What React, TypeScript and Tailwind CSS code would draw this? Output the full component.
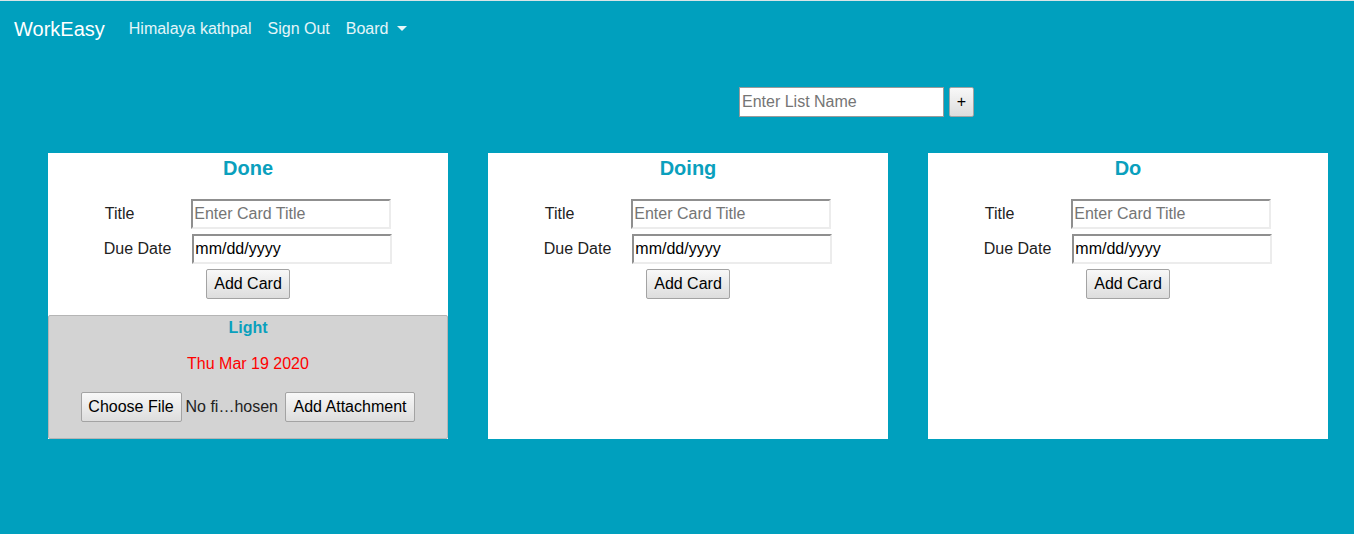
import React from 'react';

const lists = [
  { name: 'Done', cards: [{ title: 'Light', due: 'Thu Mar 19 2020' }] },
  { name: 'Doing', cards: [] },
  { name: 'Do', cards: [] },
];

const btn =
  'h-[30px] border border-[#a3a3a3] rounded-[2px] bg-gradient-to-b from-[#f8f8f8] to-[#dddddd] text-[16px] text-black leading-none';

const inset =
  'h-[30px] w-[200px] border-2 border-t-[#8f8f8f] border-l-[#8f8f8f] border-b-[#ececec] border-r-[#ececec] bg-white px-[1px] text-[16px] outline-none';

function CardItem({ title, due }: { title: string; due: string }) {
  return (
    <div className="mt-[16px] border border-[#b5b5b5] rounded-[2px] bg-[#d3d3d3] flex flex-col items-center pt-[3px] pb-[16px]">
      <h4 className="text-[16px] leading-[18px] font-bold text-[#0aa0bd]">{title}</h4>
      <p className="mt-[18px] text-[16px] leading-[18px] text-[#ff0000]">{due}</p>
      <div className="mt-[19px] flex items-center">
        <div className="flex items-center w-[200px]">
          <button className={`${btn} w-[101px]`}>Choose File</button>
          <span className="ml-[4px] text-[16px] text-[#222]">No fi…hosen</span>
        </div>
        <button className={`${btn} ml-[4px] px-[8px]`}>Add Attachment</button>
      </div>
    </div>
  );
}

function ListColumn({ name, cards }: { name: string; cards: { title: string; due: string }[] }) {
  return (
    <div className="w-[400px] bg-white flex flex-col">
      <h3 className="mt-[3px] text-center text-[20px] leading-[24px] font-bold text-[#0aa0bd]">{name}</h3>
      <div className="mt-[19px] flex justify-center">
        <div className="grid grid-cols-[auto_auto] gap-x-[20px] gap-y-[5px] items-center">
          <span className="pl-[1px] text-[16px] text-[#222]">Title</span>
          <input className={`${inset} placeholder:text-[#757575]`} placeholder="Enter Card Title" />
          <span className="text-[16px] text-[#222]">Due Date</span>
          <input className={`${inset} ml-[1px] text-black`} defaultValue="mm/dd/yyyy" readOnly />
        </div>
      </div>
      <div className="mt-[5px] flex justify-center">
        <button className={`${btn} px-[7px]`}>Add Card</button>
      </div>
      {cards.map((c) => (
        <CardItem key={c.title} title={c.title} due={c.due} />
      ))}
    </div>
  );
}

export default function App() {
  return (
    <div
      className="min-h-screen bg-[#00a0be] border-t border-[#d8e4e7]"
      style={{ fontFamily: '"Liberation Sans", Arial, sans-serif' }}
    >
      {/* Navbar */}
      <nav className="h-[55px] flex items-center px-[14px] text-white">
        <span className="text-[20px] leading-[30px]">WorkEasy</span>
        <div className="ml-[24px] flex items-center gap-[16px] text-[16px] text-white/90">
          <span>Himalaya kathpal</span>
          <span>Sign Out</span>
          <span className="flex items-center">
            Board
            <span className="ml-[9px] w-0 h-0 border-l-[5px] border-r-[5px] border-t-[5px] border-l-transparent border-r-transparent border-t-white/90" />
          </span>
        </div>
      </nav>

      {/* New list */}
      <div className="mt-[31px] pl-[739px] flex items-center">
        <input
          className="h-[30px] w-[205px] border border-[#9a9a9a] bg-white px-[2px] text-[16px] outline-none placeholder:text-[#757575]"
          placeholder="Enter List Name"
        />
        <button className={`${btn} ml-[5px] w-[25px]`}>+</button>
      </div>

      {/* Lists */}
      <div className="mt-[36px] pl-[48px] flex items-stretch gap-[40px]">
        {lists.map((l) => (
          <ListColumn key={l.name} name={l.name} cards={l.cards} />
        ))}
      </div>
    </div>
  );
}
